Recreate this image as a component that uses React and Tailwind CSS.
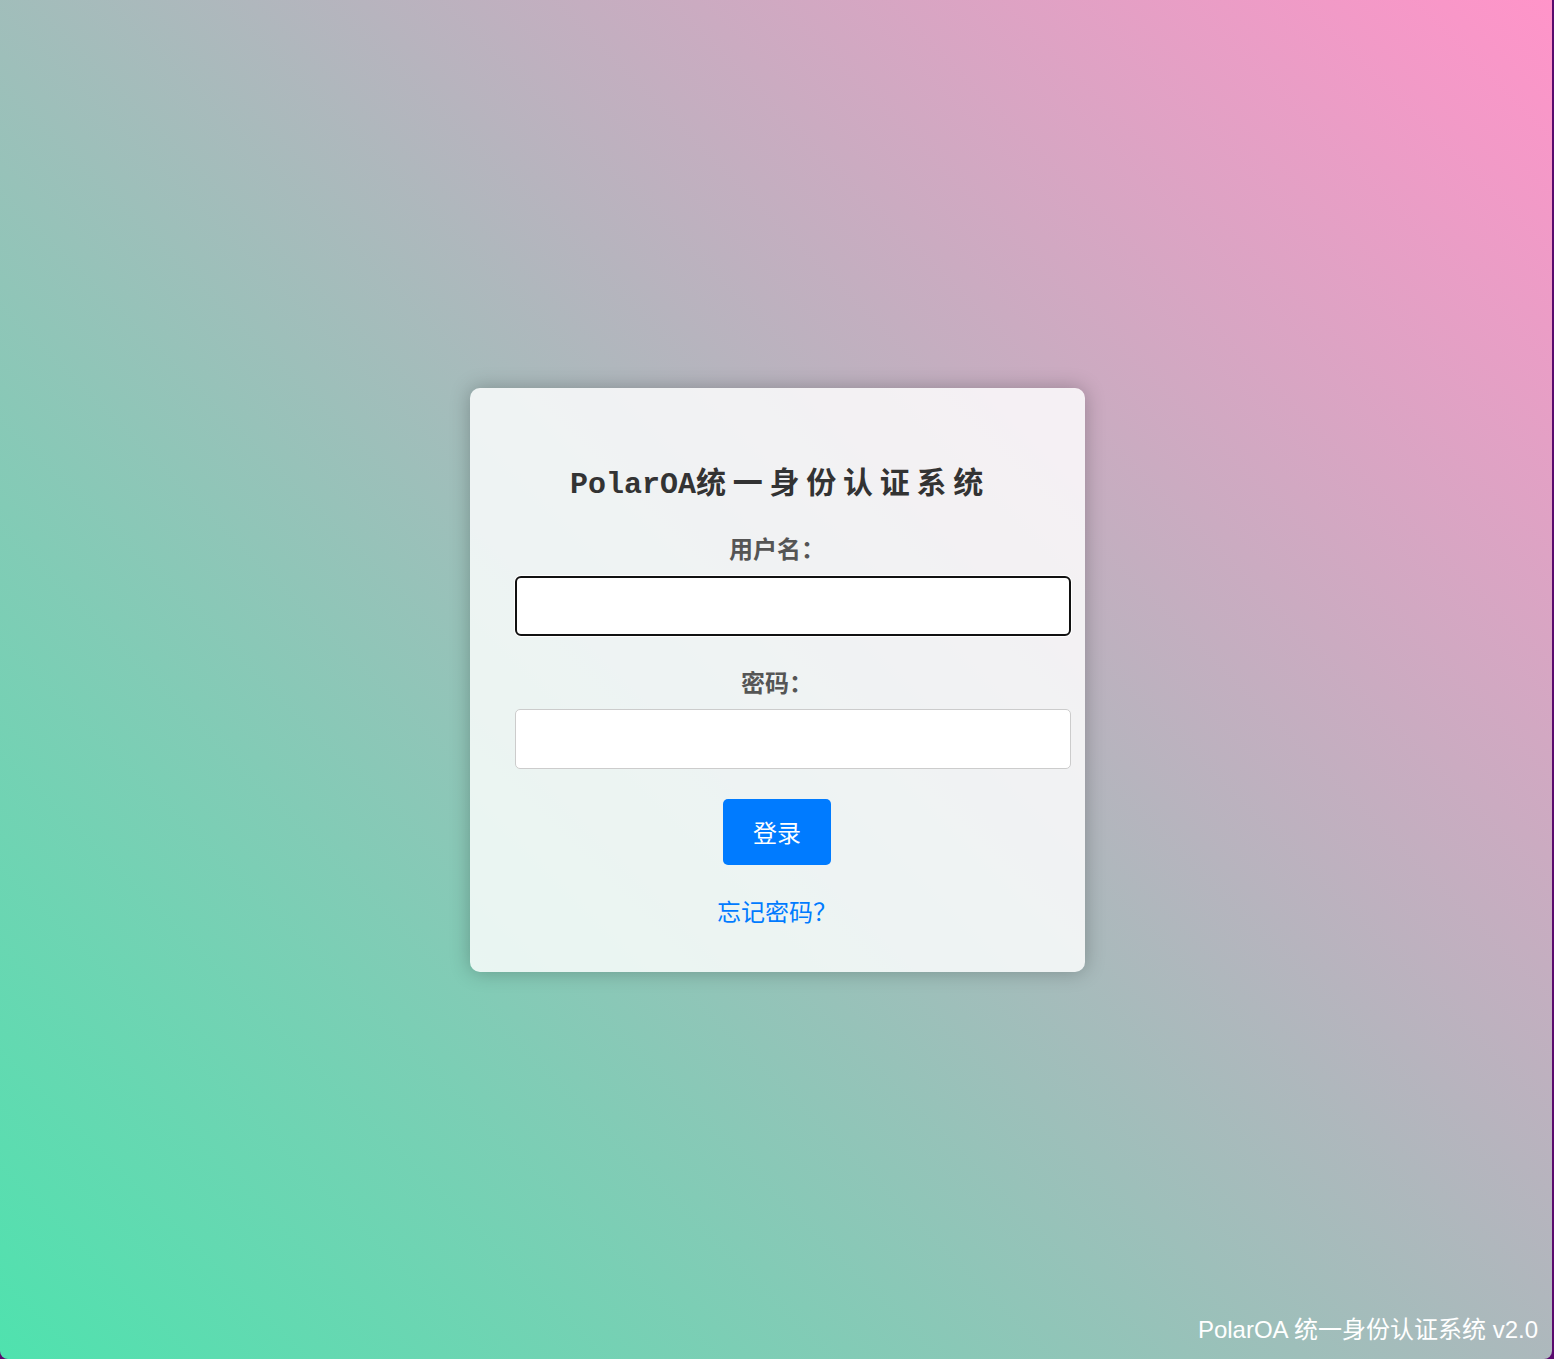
import React from "react";

export default function App() {
  return (
    <div className="h-screen w-full bg-[#5a0a6e]">
      <div className="relative flex h-full w-[calc(100%-2px)] items-center justify-center rounded-b-lg bg-[linear-gradient(45deg,#4fe2ae,#ff94c9)] pl-[2px]">
        <div className="flex w-[615px] flex-col items-center rounded-[10px] bg-white/[0.82] px-[45px] pt-[77px] pb-[43px] shadow-[0_0_20px_rgba(0,0,0,0.25)]">
          <h1 className="whitespace-nowrap pl-[6px] text-[30px] font-bold leading-[40px] text-[#333] font-['Liberation_Mono','Noto_Sans_CJK_SC',monospace]">
            PolarOA<span className="tracking-[6.75px]">统一身份认证系统</span>
          </h1>

          <label className="mt-[25px] mb-[10px] text-[24px] font-bold leading-[36px] text-[#555] font-['Noto_Sans_CJK_SC',sans-serif]">
            用户名：
          </label>
          <input
            type="text"
            className="h-[60px] w-[556px] shrink-0 self-start rounded-[6px] border-2 border-[#111] bg-white px-3 ring-1 ring-white outline-none"
          />

          <label className="mt-[28px] mb-[9px] text-[24px] font-bold leading-[36px] text-[#555] font-['Noto_Sans_CJK_SC',sans-serif]">
            密码：
          </label>
          <input
            type="password"
            className="h-[60px] w-[556px] shrink-0 self-start rounded-[5px] border border-[#ccc] bg-white px-3 outline-none"
          />

          <button
            type="button"
            className="mt-[30px] h-[66px] w-[108px] rounded-[5px] bg-[#007bff] text-[24px] leading-none text-white font-['Noto_Sans_CJK_SC',sans-serif]"
          >
            登录
          </button>

          <a
            href="#"
            className="mt-[28px] text-[24px] leading-[36px] text-[#007bff] font-['Noto_Sans_CJK_SC',sans-serif]"
          >
            忘记密码？
          </a>
        </div>

        <div className="absolute right-[14px] bottom-[13px] text-[24px] leading-[32px] text-white font-['Liberation_Sans','Noto_Sans_CJK_SC',sans-serif]">
          PolarOA 统一身份认证系统 v2.0
        </div>
      </div>
    </div>
  );
}
